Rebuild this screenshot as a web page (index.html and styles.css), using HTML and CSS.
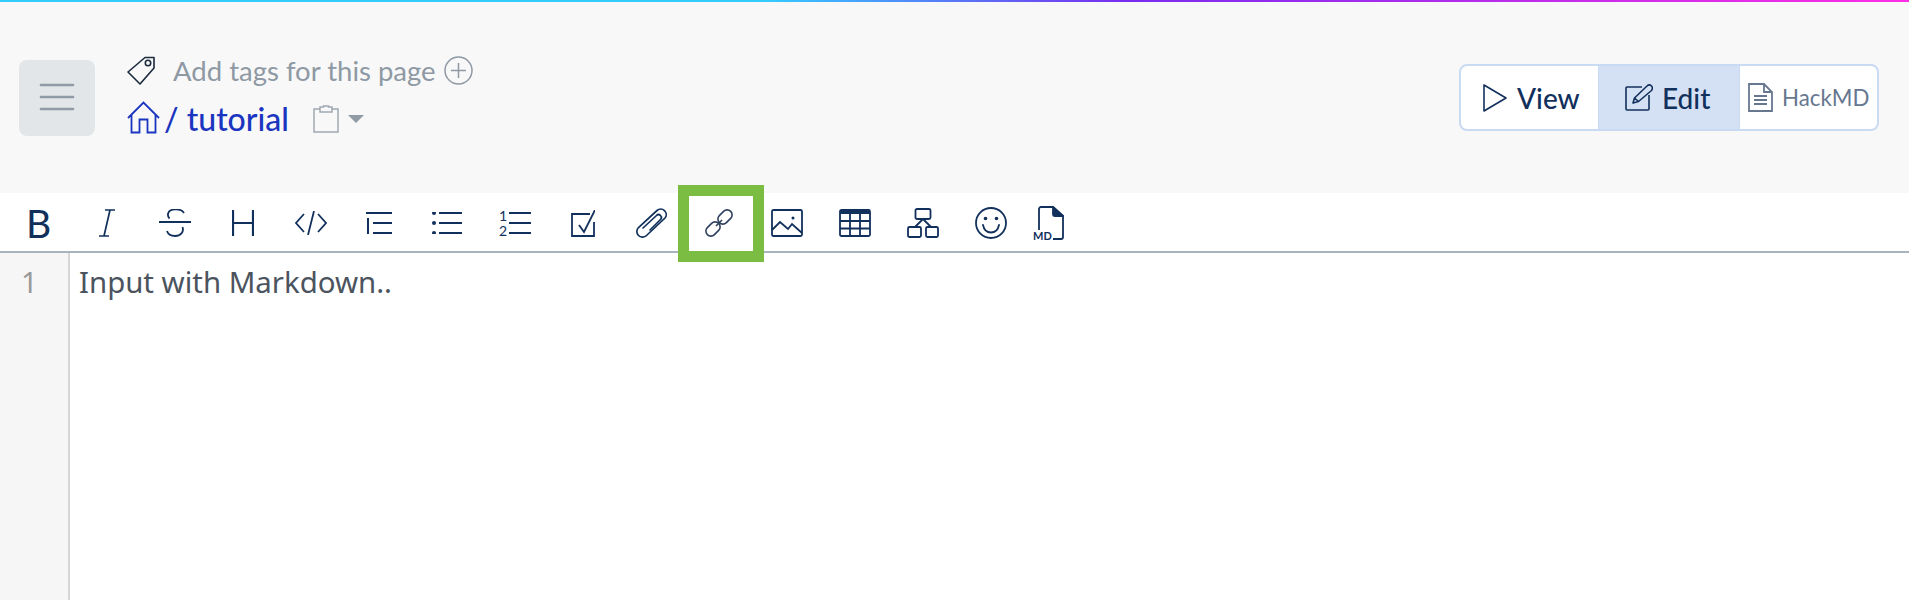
FILE: index.html
```html
<!DOCTYPE html>
<html lang="en">
<head>
	<meta charset="UTF-8">
	<title>tutorial</title>
	<link rel="stylesheet" href="styles.css">
</head>
<body>
	<div class="topbar"></div>
	<header class="header">
		<button class="menu-btn" aria-label="menu">
			<svg width="36" height="28" viewBox="0 0 36 28"><path d="M2 2h32M2 14h32M2 26h32" stroke="#919ba5" stroke-width="2.700" stroke-linecap="round"/></svg>
		</button>
		<div class="title-block">
			<div class="tags">
				<svg width="28" height="29" viewBox="0 0 28 29" fill="none" stroke="#1b2a3d" stroke-width="1.600" stroke-linejoin="round"><path d="M1 16 18 1.500h9V12L13 28z"/><circle cx="21" cy="7" r="2.700"/></svg>
				<span class="tags-text">Add tags for this page</span>
				<svg width="29" height="29" viewBox="0 0 29 29" fill="none" stroke="#8e99a4" stroke-width="1.500"><circle cx="14.500" cy="14.500" r="13.500"/><path d="M14.500 7v15M7 14.500h15"/></svg>
			</div>
			<div class="path">
				<svg width="33" height="33" viewBox="0 0 33 33" fill="none" stroke="#1a35bf" stroke-width="1.800"><path d="M1 17 16.500 1.500 32 17M4.500 14v17.500h8V18.500h8v13h8V14"/></svg>
				<a class="path-text" href="#">/ tutorial</a>
				<svg class="clip-icon" width="26" height="28" viewBox="0 0 26 28" fill="none" stroke="#9fa8b2" stroke-width="1.500"><path d="M7 4H1v23h24V4h-6M7 7h12V2h-3.500V1h-5v1H7z"/></svg>
				<span class="caret"></span>
			</div>
		</div>
		<div class="mode-switch">
			<a class="mode mode-view" href="#">
				<svg width="24" height="28" viewBox="0 0 24 28" fill="none" stroke="#12305c" stroke-width="1.600" stroke-linejoin="round"><path d="M1 1v26l22-13z"/></svg>
				View
			</a>
			<a class="mode mode-edit" href="#">
				<svg width="28" height="27" viewBox="0 0 28 27" fill="none" stroke="#12305c" stroke-width="1.600" stroke-linejoin="round"><path d="M17 3H2c-.6 0-1 .4-1 1v21c0 .6.4 1 1 1h21c.6 0 1-.4 1-1V11"/><path d="M8 19l1.500-5L22 2c1.500-1.500 3-1.500 4.500 0s1 3 0 4.500L13.500 17.500zM9.500 14l4 3.500"/></svg>
				Edit
			</a>
			<a class="mode mode-hack" href="#">
				<svg width="25" height="29" viewBox="0 0 25 29" fill="none" stroke="#66778f" stroke-width="1.800"><path d="M1 1h15l8 8v19H1zM16 1v8h8M6 13h13M6 17h13M6 21h13"/></svg>
				HackMD
			</a>
		</div>
	</header>
	<nav class="toolbar">
		<div class="tool tool-b">B</div>
		<div class="tool"><svg width="16" height="28" viewBox="0 0 16 28" fill="none" stroke="#12305c" stroke-width="1.700"><path d="M6 1h10M0 27h10M11 1 5 27"/></svg></div>
		<div class="tool"><svg width="32" height="28" viewBox="0 0 32 28" fill="none" stroke="#12305c" stroke-width="1.800"><path d="M0 13h32M25 4C22-1 10-1 9 5c-.3 2 .5 3.500 1.500 4.500M23.500 18c1.500 4-1 9-7.500 9-4 0-7-2-8-5"/></svg></div>
		<div class="tool"><svg width="22" height="26" viewBox="0 0 22 26" fill="none" stroke="#12305c" stroke-width="2.200"><path d="M1 0v26M21 0v26M1 13h20"/></svg></div>
		<div class="tool"><svg width="32" height="24" viewBox="0 0 32 24" fill="none" stroke="#12305c" stroke-width="1.800"><path d="M9 3 1 12l8 9M23 3l8 9-8 9M19 0l-6 24"/></svg></div>
		<div class="tool"><svg width="26" height="22" viewBox="0 0 26 22" fill="none" stroke="#12305c" stroke-width="2"><path d="M0 1h26M2 6v16M7 11h19M7 21h19"/></svg></div>
		<div class="tool"><svg width="30" height="22" viewBox="0 0 30 22" fill="none" stroke="#12305c" stroke-width="2"><path d="M7 1h23M7 11h23M7 21h23"/><circle cx="2" cy="1" r="2" fill="#12305c" stroke="none"/><circle cx="2" cy="11" r="2" fill="#12305c" stroke="none"/><circle cx="2" cy="21" r="2" fill="#12305c" stroke="none"/></svg></div>
		<div class="tool tool-ol"><span class="ol-nums"><span>1</span><span>2</span></span><svg width="22" height="22" viewBox="0 0 22 22" fill="none" stroke="#12305c" stroke-width="2"><path d="M0 1h22M0 11h22M0 21h22"/></svg></div>
		<div class="tool"><svg width="24" height="27" viewBox="0 0 24 27" fill="none" stroke="#12305c" stroke-width="1.800"><path d="M19 4H1v22h22V12M8 15l5 7L24 0"/></svg></div>
		<div class="tool"><svg width="33" height="30" viewBox="0 0 33 30" fill="none" stroke="#12305c" stroke-width="1.700" stroke-linecap="round"><path d="M11.500 27.500 30 10a5.500 5.500 0 0 0-8-7.500L3.500 19.500a5.500 5.500 0 0 0 8 8"/><path d="M15 22 25.500 11.500a2.800 2.800 0 0 0-4-4L8 20"/></svg></div>
		<div class="tool tool-link"><svg width="28" height="30" viewBox="0 0 28 30" fill="none" stroke="#2f4160" stroke-width="1.600"><rect x="12" y="4" width="16" height="10" rx="5" transform="rotate(-45 20 9)"/><rect x="0" y="16" width="16" height="10" rx="5" transform="rotate(-45 8 21)"/><path d="M11 18l6-6"/></svg></div>
		<div class="tool"><svg width="32" height="28" viewBox="0 0 32 28" fill="none" stroke="#12305c" stroke-width="1.800"><rect x="1" y="1" width="30" height="26" rx="1.500"/><path d="M1 21l8-8 8 7 4-5 10 9"/><circle cx="22" cy="9" r="1.500" fill="#12305c" stroke="none"/></svg></div>
		<div class="tool"><svg width="32" height="28" viewBox="0 0 32 28" fill="none" stroke="#12305c" stroke-width="1.800"><rect x="1" y="1" width="30" height="26" rx="1.500"/><path d="M1 3h30" stroke-width="4"/><path d="M1 12h30M1 19.500h30M11 4v23M21 4v23"/></svg></div>
		<div class="tool"><svg width="32" height="30" viewBox="0 0 32 30" fill="none" stroke="#12305c" stroke-width="1.800"><rect x="8.500" y="1" width="15" height="10" rx="1.500"/><rect x="1" y="19" width="13" height="10" rx="1.500"/><rect x="19" y="19" width="12" height="10" rx="1.500"/><path d="M16 11l-8 8M16 11l8 8"/></svg></div>
		<div class="tool"><svg width="32" height="32" viewBox="0 0 32 32" fill="none" stroke="#12305c" stroke-width="1.800" stroke-linecap="round"><circle cx="16" cy="16" r="15"/><path d="M8 18c2 10 14 10 16 0"/><circle cx="10.500" cy="11.500" r="1.800" fill="#12305c" stroke="none"/><circle cx="21.500" cy="11.500" r="1.800" fill="#12305c" stroke="none"/></svg></div>
		<div class="tool tool-md"><svg width="26" height="34" viewBox="0 0 26 34" fill="none" stroke="#12305c" stroke-width="1.800" stroke-linejoin="round"><path d="M1 24V3c0-1 1-2 2-2h12l10 9v21c0 1-1 2-2 2h-8"/><path d="M15 1l10 9h-8c-1.500 0-2-1-2-2z" fill="#12305c"/></svg><span class="md-label">MD</span></div>
	</nav>
	<main class="editor">
		<div class="gutter">1</div>
		<div class="code">Input with Markdown..</div>
	</main>
</body>
</html>
```

FILE: styles.css
```css
*{
	margin: 0;
	padding: 0;
	box-sizing: border-box;
}
html,body{
	height: 100%;
	overflow: hidden;
}
body{
	display: flex;
	flex-direction: column;
	background: #fff;
	font-family: Lato, "Noto Sans", sans-serif;
}
svg{
	display: block;
	flex: none;
}
a{
	text-decoration: none;
}
.topbar{
	height: 2px;
	flex: none;
	background: linear-gradient(90deg, #33ccff 0%, #33ccff 40%, #7a2cf0 59%, #ff2de6 100%);
}
.header{
	height: 191px;
	flex: none;
	padding: 58px 30px 0 19px;
	display: flex;
	align-items: flex-start;
	background: #f8f8f8;
}
.menu-btn{
	width: 76px;
	height: 76px;
	padding-bottom: 2px;
	border: 0;
	border-radius: 8px;
	background: #e3e6e9;
	display: flex;
	align-items: center;
	justify-content: center;
}
.title-block{
	margin: -4px 0 0 32px;
	display: flex;
	flex-direction: column;
	gap: 16px;
}
.tags{
	height: 29px;
	display: flex;
	align-items: center;
}
.tags-text{
	margin: 0 8px 0 18px;
	font-size: 27.5px;
	color: #8e99a4;
}
.path{
	display: flex;
	align-items: center;
	height: 33px;
}
.path-text{
	margin-left: 4px;
	padding-top: 2px;
	font-size: 32px;
	font-weight: 500;
	color: #1a35bf;
}
.clip-icon{
	margin: 2px 0 0 24px;
}
.caret{
	margin: 3px 0 0 9px;
	border-left: 8px solid transparent;
	border-right: 8px solid transparent;
	border-top: 8px solid #919ba5;
}
.mode-switch{
	margin-left: auto;
	margin-top: 4px;
	height: 67px;
	display: flex;
	border: 2px solid #c9daf3;
	border-radius: 8px;
	background: #fff;
	overflow: hidden;
}
.mode{
	display: flex;
	align-items: center;
	color: #12305c;
	font-size: 28px;
	font-weight: 500;
}
.mode-view{
	width: 138px;
	padding-left: 22px;
	gap: 10px;
}
.mode-edit{
	width: 140px;
	padding-left: 26px;
	gap: 9px;
	background: #d4e1f5;
	box-shadow: 0 0 0 1px #c9daf3;
}
.mode-hack{
	width: 138px;
	padding-left: 9px;
	gap: 9px;
	font-size: 22.3px;
	font-weight: 400;
	color: #66778f;
}
.toolbar{
	height: 60px;
	flex: none;
	padding: 2px 0 0 5px;
	display: flex;
	border-bottom: 2px solid #a9b2bf;
}
.tool{
	width: 68px;
	height: 56px;
	flex: none;
	display: flex;
	align-items: center;
	justify-content: center;
}
.tool-b{
	padding-right: 1px;
	font-size: 39px;
	color: #12305c;
}
.tool-ol{
	gap: 2px;
}
.ol-nums{
	display: flex;
	flex-direction: column;
	font-size: 14px;
	line-height: 15px;
	color: #12305c;
}
.tool-link{
	position: relative;
}
.tool-link::after{
	content: "";
	box-sizing: border-box;
	position: absolute;
	left: -7px;
	top: -10px;
	width: 86px;
	height: 77px;
	border: 11px solid #7bbd42;
}
.tool-md{
	position: relative;
}
.tool-md svg{
	margin-right: 17px;
}
.md-label{
	position: absolute;
	left: 8px;
	bottom: 10px;
	font-size: 11px;
	line-height: 10px;
	font-weight: 700;
	color: #12305c;
}
.editor{
	flex: 1;
	display: flex;
	font-family: "Noto Sans", sans-serif;
	font-size: 29.4px;
}
.gutter{
	width: 70px;
	padding: 9px 0 0 21px;
	background: #f6f6f6;
	border-right: 2px solid #d6d6d6;
	color: #999;
}
.code{
	padding: 9px 0 0 9px;
	color: #4b545e;
}
```
